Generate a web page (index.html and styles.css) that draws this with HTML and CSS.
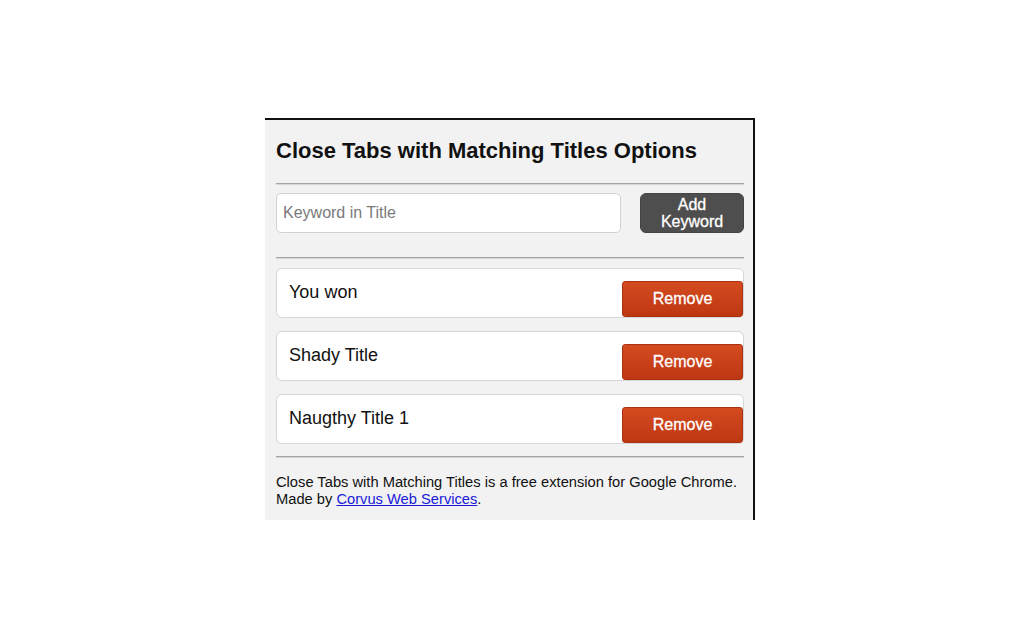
FILE: index.html
```html
<!DOCTYPE html>
<html>
<head>
<meta charset="utf-8">
<link rel="stylesheet" href="styles.css">
</head>
<body>
<div class="page">
  <div class="panel">
    <h1 class="title">Close Tabs with Matching Titles Options</h1>
    <div class="rule rule-top"></div>
    <div class="add-row">
      <input class="keyword" type="text" placeholder="Keyword in Title">
      <button class="add-btn">Add<br>Keyword</button>
    </div>
    <div class="rule rule-mid"></div>
    <ul class="list">
      <li class="item"><span class="item-text">You won</span><button class="remove">Remove</button></li>
      <li class="item"><span class="item-text">Shady Title</span><button class="remove">Remove</button></li>
      <li class="item"><span class="item-text">Naugthy Title 1</span><button class="remove">Remove</button></li>
    </ul>
    <div class="rule rule-bottom"></div>
    <p class="footer">Close Tabs with Matching Titles is a free extension for Google Chrome.<br>Made by <a href="#">Corvus Web Services</a>.</p>
  </div>
</div>
</body>
</html>
```

FILE: styles.css
```css
html, body {
  margin: 0;
  padding: 0;
  background: #ffffff;
}

body {
  font-family: "Liberation Sans", Arial, sans-serif;
  color: #111;
}

.page {
  padding: 118px 0 0 265px;
}

.panel {
  box-sizing: border-box;
  width: 490px;
  background: #f2f2f2;
  border-top: 2px solid #111;
  border-right: 2px solid #111;
  padding: 18px 9px 12px 11px;
}

.title {
  margin: 0;
  font-size: 22px;
  line-height: 25px;
  font-weight: bold;
  color: #111;
}

.rule {
  height: 0;
  border-top: 1px solid #a4a4a4;
  border-bottom: 1px solid #d6d6d6;
}

.rule-top {
  margin-top: 20px;
}

.add-row {
  display: flex;
  gap: 19px;
  margin-top: 8px;
  height: 40px;
}

.keyword {
  box-sizing: border-box;
  width: 345px;
  height: 40px;
  margin: 0;
  border: 1px solid #d2d2d2;
  border-radius: 5px;
  background: #fff;
  padding: 0 6px;
  font-family: "Liberation Sans", Arial, sans-serif;
  font-size: 16px;
  color: #222;
  outline: none;
}

.keyword::placeholder {
  color: #7a7a7a;
}

.add-btn {
  box-sizing: border-box;
  width: 104px;
  height: 40px;
  margin: 0;
  padding: 0;
  border: 1px solid #444;
  border-radius: 6px;
  background: #4e4e4e;
  color: #fff;
  font-family: "Liberation Sans", Arial, sans-serif;
  font-size: 16px;
  line-height: 17px;
  -webkit-text-stroke: 0.3px #fff;
}

.rule-mid {
  margin-top: 24px;
}

.list {
  list-style: none;
  margin: 9px 0 0 0;
  padding: 0;
  display: flex;
  flex-direction: column;
  gap: 13px;
}

.item {
  box-sizing: border-box;
  height: 50px;
  display: flex;
  justify-content: space-between;
  background: #fff;
  border: 1px solid #d6d6d6;
  border-radius: 6px;
}

.item-text {
  padding: 12px 0 0 12px;
  font-size: 18px;
  line-height: 22px;
  color: #111;
}

.remove {
  box-sizing: border-box;
  align-self: flex-end;
  width: 121px;
  height: 36px;
  margin: 0;
  padding: 0;
  border: 1px solid #a93211;
  border-radius: 3px;
  background: linear-gradient(#d44b20, #bd3712);
  color: #fff;
  font-family: "Liberation Sans", Arial, sans-serif;
  font-size: 16px;
  line-height: 20px;
  -webkit-text-stroke: 0.3px #fff;
}

.rule-bottom {
  margin-top: 12px;
}

.footer {
  margin: 16px 0 0 0;
  font-size: 14.7px;
  line-height: 17px;
  color: #111;
}

.footer a {
  color: #1a1ad8;
  text-decoration: underline;
}
```
